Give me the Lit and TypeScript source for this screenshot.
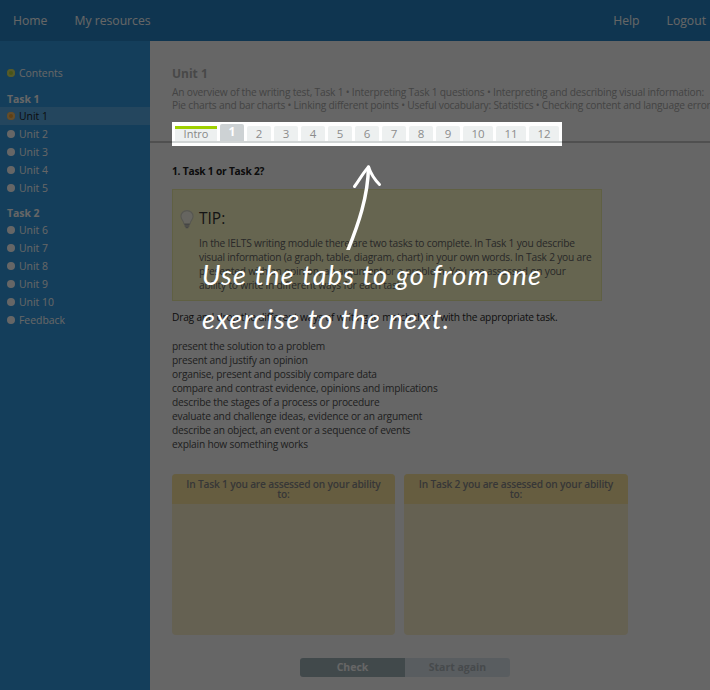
import { LitElement, html, css, svg } from "lit";
import { customElement } from "lit/decorators.js";

const task1 = ["Unit 1", "Unit 2", "Unit 3", "Unit 4", "Unit 5"];
const task2 = ["Unit 6", "Unit 7", "Unit 8", "Unit 9", "Unit 10", "Feedback"];
const tabs = ["2", "3", "4", "5", "6", "7", "8", "9", "10", "11", "12"];
const ways = [
  "present the solution to a problem",
  "present and justify an opinion",
  "organise, present and possibly compare data",
  "compare and contrast evidence, opinions and implications",
  "describe the stages of a process or procedure",
  "evaluate and challenge ideas, evidence or an argument",
  "describe an object, an event or a sequence of events",
  "explain how something works",
];

@customElement("app-root")
export class AppRoot extends LitElement {
  static styles = css`
    :host {
      display: block;
      position: relative;
      width: 710px;
      height: 690px;
      overflow: hidden;
      background: #fff;
      font-family: "Open Sans", "Noto Sans", sans-serif;
      font-size: 10.2px;
      letter-spacing: -0.2px;
      color: #333;
    }
    .top {
      height: 41px;
      background: #2686c8;
      display: flex;
      align-items: center;
      padding: 0 0 0 13px;
      font-size: 12.2px;
      letter-spacing: 0;
      color: #fff;
    }
    .top span { margin-right: 27px; }
    .top .spacer { flex: 1; margin: 0; }
    .top .logout { margin-right: 4px; }
    .body { display: flex; height: 649px; }
    .side {
      width: 150px;
      flex: none;
      background: #329ce4;
      padding-top: 23px;
      box-sizing: border-box;
      color: #fff;
    }
    .row {
      display: flex;
      align-items: center;
      box-sizing: border-box;
      height: 18px;
      padding: 0 0 1px 7px;
      gap: 4px;
      font-size: 10.4px;
      letter-spacing: 0;
    }
    .dot { width: 8px; height: 8px; border-radius: 50%; background: #fff; flex: none; }
    .dot.contents { background: #b4d23c; box-shadow: inset 0 0 0 2px #d4e06c; }
    .dot.cur { background: #f0a030; box-shadow: inset 0 0 0 2px #f4c070; }
    .row.cur { background: #5ab0ec; color: #222; }
    .group {
      font-weight: 700;
      padding-left: 7px;
      height: 16px;
      line-height: 16px;
      font-size: 10.4px;
      letter-spacing: 0;
    }
    .g1 { margin-top: 9px; }
    .g2 { margin-top: 8px; }
    .main { flex: 1; min-width: 0; padding: 25px 0 0 22px; box-sizing: border-box; }
    h1 {
      margin: 0 0 4px;
      font-size: 12px;
      letter-spacing: 0;
      line-height: 16px;
      color: #b4b4b4;
      font-weight: 700;
    }
    .intro {
      margin: 0;
      line-height: 13px;
      color: #aaa;
      white-space: nowrap;
    }
    .tabline {
      margin: 10px 0 0 -22px;
      height: 24px;
      position: relative;
    }
    .rule { position: absolute; left: 0; right: 0; top: 19px; height: 2px; background: #c8c8c8; }
    .tabs {
      position: absolute;
      z-index: 3;
      left: 22px;
      top: 0;
      width: 390px;
      height: 24px;
      box-sizing: border-box;
      padding: 0 0 0 3px;
      background: #fff;
      display: flex;
      align-items: flex-end;
      gap: 3px;
    }
    .tabs .base {
      position: absolute;
      left: 0;
      right: 0;
      top: 19px;
      height: 2px;
      background: #d0d4d4;
    }
    .tab {
      position: relative;
      z-index: 1;
      box-sizing: border-box;
      width: 24px;
      height: 15px;
      margin-bottom: 5px;
      background: #edf0f0;
      color: #8c8c8c;
      font-size: 11.5px;
      letter-spacing: 0;
      line-height: 16px;
      text-align: center;
      border-radius: 2px 2px 0 0;
    }
    .tab.wide { width: 30px; }
    .tab.intro-tab {
      width: 42px;
      font-size: 11px;
      border-top: 3px solid #9fd000;
      border-radius: 0;
      line-height: 10px;
      color: #888;
    }
    .tab.active {
      height: 17px;
      background: #cdd2d4;
      color: #fff;
      font-weight: 700;
      font-size: 12px;
      line-height: 16px;
    }
    .q { margin: 18px 0 0; font-weight: 700; line-height: 14px; color: #222; }
    .tip {
      box-sizing: border-box;
      width: 430px;
      height: 112px;
      margin-top: 11px;
      border: 1px solid #f0f0a8;
      background: #fffcc8;
      display: flex;
      padding: 18px 0 0 7px;
      gap: 5px;
    }
    .bulb { width: 14px; height: 20px; flex: none; margin-top: 1px; }
    .tip h2 { margin: 0 0 8px; font-weight: 400; font-size: 15.5px; letter-spacing: 0; line-height: 20px; color: #333; }
    .tip p { margin: 0; line-height: 14px; color: #666; white-space: nowrap; }
    .drag { margin: 9px 0 0; line-height: 14px; color: #2a2a2a; white-space: nowrap; }
    .ways { margin: 15px 0 0; padding: 0; list-style: none; line-height: 14px; color: #505050; }
    .drops { display: flex; gap: 9px; margin-top: 23px; }
    .drop {
      width: 223px;
      height: 161px;
      border-radius: 4px;
      overflow: hidden;
      background: #fdf3cc;
    }
    .drop:last-child { width: 224px; }
    .drop div {
      height: 30px;
      box-sizing: border-box;
      padding: 5px 8px 0;
      background: #ffe9a0;
      font-weight: 600;
      line-height: 10px;
      text-align: center;
      color: #8a8a8a;
    }
    .btns { display: flex; justify-content: center; margin: 23px 0 0 -22px; width: 510px; }
    .btn {
      width: 105px;
      height: 19px;
      line-height: 18px;
      text-align: center;
      font-weight: 700;
      font-size: 10.5px;
      letter-spacing: 0;
    }
    .check { background: #a4b6bc; color: #fff; border-radius: 3px 0 0 3px; }
    .again { background: #dfe8f0; color: #b0b8be; border-radius: 0 3px 3px 0; }
    .shade {
      position: absolute;
      inset: 0;
      background: rgba(0, 0, 0, 0.6);
      z-index: 2;
    }
    .arrow { position: absolute; left: 330px; top: 155px; width: 70px; height: 95px; z-index: 4; }
    .note {
      position: absolute;
      left: 202px;
      top: 253px;
      z-index: 4;
      color: #fff;
      font-family: "Lato", "Open Sans", sans-serif;
      font-style: italic;
      font-size: 27px;
      line-height: 44px;
      letter-spacing: 1.2px;
      white-space: nowrap;
    }
  `;

  render() {
    return html`
      <div class="top">
        <span>Home</span><span>My resources</span><span class="spacer"></span>
        <span>Help</span><span class="logout">Logout</span>
      </div>
      <div class="body">
        <nav class="side">
          <div class="row"><i class="dot contents"></i>Contents</div>
          <div class="group g1">Task 1</div>
          ${task1.map(
            (u, i) => html`<div class="row ${i === 0 ? "cur" : ""}"><i class="dot ${i === 0 ? "cur" : ""}"></i>${u}</div>`
          )}
          <div class="group g2">Task 2</div>
          ${task2.map((u) => html`<div class="row"><i class="dot"></i>${u}</div>`)}
        </nav>
        <main class="main">
          <h1>Unit 1</h1>
          <p class="intro">
            An overview of the writing test, Task 1 • Interpreting Task 1 questions • Interpreting and describing visual information:<br />
            Pie charts and bar charts • Linking different points • Useful vocabulary: Statistics • Checking content and language errors
          </p>
          <div class="tabline">
            <div class="rule"></div>
            <div class="tabs">
              <div class="base"></div>
              <div class="tab intro-tab">Intro</div>
              <div class="tab active">1</div>
              ${tabs.map((t) => html`<div class="tab ${t.length > 1 ? "wide" : ""}">${t}</div>`)}
            </div>
          </div>
          <p class="q">1. Task 1 or Task 2?</p>
          <section class="tip">
            <svg class="bulb" viewBox="0 0 15 20">
              <path d="M7.500 1C3.800 1 1 3.700 1 7.100c0 2.600 1.700 4 2.600 6 .3.700.4 1.200.5 1.900h6.800c.1-.7.2-1.200.5-1.900.9-2 2.600-3.400 2.600-6C14 3.700 11.200 1 7.500 1z" fill="#fffdf0" stroke="#d8d8c8" stroke-width="1.200"/>
              <path d="M4.600 16h5.800M5 17.600h5M6 19.200h3" stroke="#b0b0b0" stroke-width="1.200"/>
            </svg>
            <div>
              <h2>TIP:</h2>
              <p>
                In the IELTS writing module there are two tasks to complete. In Task 1 you describe<br />
                visual information (a graph, table, diagram, chart) in your own words. In Task 2 you are<br />
                presented with an opinion, an argument or a problem. You are assessed on your<br />
                ability to write in different ways for each task.
              </p>
            </div>
          </section>
          <p class="drag">Drag and drop the different ways of writing to match them with the appropriate task.</p>
          <ul class="ways">${ways.map((w) => html`<li>${w}</li>`)}</ul>
          <div class="drops">
            <div class="drop"><div>In Task 1 you are assessed on your ability to:</div></div>
            <div class="drop"><div>In Task 2 you are assessed on your ability to:</div></div>
          </div>
          <div class="btns">
            <div class="btn check">Check</div>
            <div class="btn again">Start again</div>
          </div>
        </main>
      </div>
      <div class="shade"></div>
      ${svg`<svg class="arrow" viewBox="0 0 70 95" fill="none" stroke="#fff" stroke-linecap="round" stroke-linejoin="round">
        <path d="M18 95C28 70 38 42 38.500 12" stroke-width="3.500"/>
        <path d="M24.500 31.500C30 24 33 18 38.500 12C41 19 45 25 49.500 29.500" stroke-width="3"/>
      </svg>`}
      <div class="note">Use the tabs to go from one<br />exercise to the next.</div>
    `;
  }
}
